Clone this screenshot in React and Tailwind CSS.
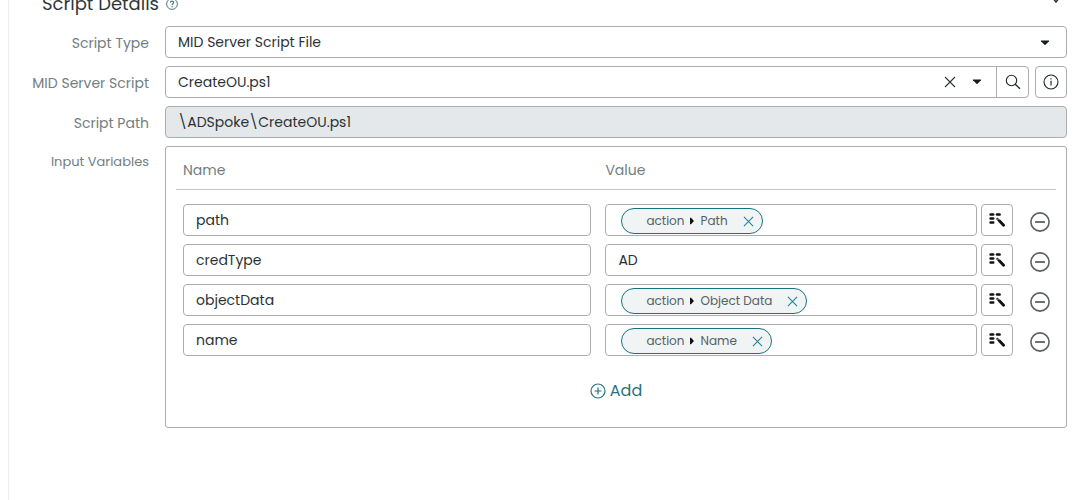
import { useState } from 'react'

const initialRows = [
  { id: 1, name: 'path', pill: 'Path' },
  { id: 2, name: 'credType', text: 'AD' },
  { id: 3, name: 'objectData', pill: 'Object Data' },
  { id: 4, name: 'name', pill: 'Name' },
]

const boxClass = 'h-8 rounded-[4px] border border-[#a9adae] bg-white'
const iconButton = `${boxClass} w-8 shrink-0 flex items-center justify-center`
const labelClass = 'w-[140px] shrink-0 pt-0.5 text-right text-[#727e80]'

function Caret({ className = '' }) {
  return (
    <svg viewBox="0 0 10 6" className={`w-[10px] h-[6px] ${className}`} fill="#161b1c" aria-hidden="true">
      <path d="M1.2.5h7.6q.7.2.2.8L5.5 4.8q-.5.5-1 0L1 1.3Q.5.7 1.2.5z" />
    </svg>
  )
}

function Cross({ size = 12 }) {
  return (
    <svg viewBox="0 0 12 12" width={size} height={size} fill="none" stroke="currentColor" strokeWidth="1.1" aria-hidden="true">
      <path d="M1 1l10 10M11 1L1 11" />
    </svg>
  )
}

function HelpIcon() {
  return (
    <svg viewBox="0 0 12 12" className="w-3 h-3" fill="none" stroke="#4c7884" aria-hidden="true">
      <circle cx="6" cy="6" r="5.4" />
      <path d="M4.4 4.8c0-2.1 3.3-2.1 3.3-.2 0 1.2-1.6 1.2-1.6 2.4M6.1 8v1.2" strokeWidth="1.2" />
    </svg>
  )
}

function SearchIcon() {
  return (
    <svg viewBox="0 0 16 16" className="w-4 h-4" fill="none" stroke="#202627" strokeWidth="1.1" aria-hidden="true">
      <circle cx="6.5" cy="6.5" r="5.2" />
      <path d="M10.2 10.2l4.8 4.6" strokeWidth="1.3" />
    </svg>
  )
}

function InfoIcon() {
  return (
    <svg viewBox="0 0 16 16" className="w-4 h-4" fill="none" stroke="#202627" strokeWidth="1.1" aria-hidden="true">
      <circle cx="8" cy="8" r="7" />
      <path d="M8 6.8v4.6M8 4.3v1.3" strokeWidth="1.2" />
    </svg>
  )
}

function PickerIcon() {
  return (
    <svg viewBox="0 0 16 14" className="w-4 h-[14px]" fill="none" stroke="#111" strokeLinecap="round" aria-hidden="true">
      <path d="M1.6 1.5h2.6M8 1.5h2.6M1.6 5.5h2.6M1.6 9.500h2.6" strokeWidth="2.6" />
      <path d="M10.6 8l4 4.2" strokeWidth="2.8" />
      <path d="M8.2 5.8l1.4 1.4" strokeWidth="2" />
      <path d="M8.3 5.9l.6.6" stroke="#fff" strokeWidth=".9" />
    </svg>
  )
}

function MinusIcon() {
  return (
    <svg viewBox="0 0 20 20" className="w-5 h-5" fill="none" stroke="#5d6163" strokeWidth="1.6" aria-hidden="true">
      <circle cx="10" cy="10" r="9.1" />
      <path d="M5 10h10" strokeWidth="1.8" />
    </svg>
  )
}

function PlusIcon() {
  return (
    <svg viewBox="0 0 16 16" className="w-4 h-4" fill="none" stroke="currentColor" strokeWidth="1.2" aria-hidden="true">
      <circle cx="8" cy="8" r="7" />
      <path d="M4.5 8h7M8 4.5v7" />
    </svg>
  )
}

function Pill({ label, onClear }) {
  return (
    <span className="h-[26px] flex items-center rounded-full border border-[#17727f] bg-[#f0f4f5] pl-6 pr-2 text-xs text-[#566163]">
      action
      <svg viewBox="0 0 4 8" className="w-1 h-2 mx-[6px]" fill="#111" aria-hidden="true">
        <path d="M0 .8l1 0 3 3.200-3 3.200H0z" />
      </svg>
      {label}
      <button type="button" aria-label={`Remove ${label}`} onClick={onClear} className="ml-[15px] text-[#1f7f92]">
        <Cross size={11} />
      </button>
    </span>
  )
}

export default function App() {
  const [type, setType] = useState('MID Server Script File')
  const [script, setScript] = useState('CreateOU.ps1')
  const [rows, setRows] = useState(initialRows)

  const update = (id, patch) => setRows(rs => rs.map(r => (r.id === id ? { ...r, ...patch } : r)))
  const remove = id => setRows(rs => rs.filter(r => r.id !== id))
  const add = () => setRows(rs => [...rs, { id: Date.now(), name: '', text: '' }])

  return (
    <div className="min-h-screen bg-white pl-2 font-['Poppins','Inter',sans-serif] text-sm text-[#2b3335]">
      <main className="min-h-screen overflow-hidden border-l border-[#ededed] pr-[17px]">
        <header className="-mt-2 h-6 flex items-center justify-between pl-[33px] pr-[6px]">
          <h2 className="flex items-center gap-[7px] text-lg text-[#2f383a]">
            Script Details
            <HelpIcon />
          </h2>
          <button type="button" aria-label="Collapse" className="h-4 self-start">
            <svg viewBox="0 0 10 6" className="w-[10px] h-[6px]" fill="none" stroke="#333" strokeWidth="1.5" aria-hidden="true">
              <path d="M1 0l4 5 4-5" />
            </svg>
          </button>
        </header>

        <form className="mt-[10px] flex flex-col gap-2" onSubmit={e => e.preventDefault()}>
          <div className="flex items-center gap-4">
            <label htmlFor="type" className={labelClass}>Script Type</label>
            <div className="relative flex-1">
              <select
                id="type"
                value={type}
                onChange={e => setType(e.target.value)}
                className={`${boxClass} block w-full appearance-none px-3`}
              >
                <option>MID Server Script File</option>
              </select>
              <Caret className="absolute right-[17px] top-[14px] pointer-events-none" />
            </div>
          </div>

          <div className="flex items-center gap-4">
            <label htmlFor="script" className={labelClass}>MID Server Script</label>
            <div className="flex flex-1 gap-[6px]">
              <div className={`${boxClass} flex flex-1 items-center`}>
                <input
                  id="script"
                  value={script}
                  onChange={e => setScript(e.target.value)}
                  className="min-w-0 flex-1 px-3 outline-none"
                />
                <button type="button" aria-label="Clear" onClick={() => setScript('')}>
                  <Cross />
                </button>
                <button type="button" aria-label="Show options" className="ml-4 mr-[14px]">
                  <Caret />
                </button>
                <button type="button" aria-label="Search" className="h-full w-8 flex items-center justify-center border-l border-[#a9adae]">
                  <SearchIcon />
                </button>
              </div>
              <button type="button" aria-label="Information" className={iconButton}>
                <InfoIcon />
              </button>
            </div>
          </div>

          <div className="flex items-center gap-4">
            <label htmlFor="script-path" className={labelClass}>Script Path</label>
            <input
              id="script-path"
              readOnly
              value={'\\ADSpoke\\CreateOU.ps1'}
              className="h-8 min-w-0 flex-1 rounded-[4px] border border-[#a9adae] bg-[#e4e8eb] px-3"
            />
          </div>

          <div className="flex items-start gap-4">
            <span id="variables" className={`${labelClass} mt-[5px] text-[13px]`}>Input Variables</span>
            <div className="min-w-0 flex-1 rounded-[3px] border border-[#a9adae] px-[10px]">
              <table aria-labelledby="variables" className="w-full table-fixed border-separate border-spacing-0">
                <thead>
                  <tr className="text-left leading-[22px] text-[#727e80]">
                    <th className="w-[48%] border-b border-[#c4c8c9] pt-3 pb-2 pl-[7px] font-normal">Name</th>
                    <th className="border-b border-[#c4c8c9] pt-3 pb-2 pl-[7px] font-normal">Value</th>
                    <td className="w-[43px] border-b border-[#c4c8c9]" />
                  </tr>
                </thead>
                <tbody className="[&>tr:first-child>td]:pt-[14px]">
                  {rows.map(row => (
                    <tr key={row.id}>
                      <td className="px-[7px] pt-2">
                        <input
                          aria-label="Name"
                          value={row.name}
                          onChange={e => update(row.id, { name: e.target.value })}
                          className={`${boxClass} block w-full px-3`}
                        />
                      </td>
                      <td className="pl-[7px] pt-2">
                        <div className="flex gap-1">
                          {row.pill ? (
                            <div className={`${boxClass} flex min-w-0 flex-1 items-center pt-0.5 pl-[15px]`}>
                              <Pill label={row.pill} onClear={() => update(row.id, { pill: null, text: '' })} />
                            </div>
                          ) : (
                            <input
                              aria-label="Value"
                              value={row.text}
                              onChange={e => update(row.id, { text: e.target.value })}
                              className={`${boxClass} min-w-0 flex-1 px-3`}
                            />
                          )}
                          <button type="button" aria-label="Pick data" className={iconButton}>
                            <PickerIcon />
                          </button>
                        </div>
                      </td>
                      <td className="pt-2 pr-[6px]">
                        <button type="button" aria-label="Remove variable" onClick={() => remove(row.id)} className="ml-auto block pt-1">
                          <MinusIcon />
                        </button>
                      </td>
                    </tr>
                  ))}
                </tbody>
              </table>
              <button
                type="button"
                onClick={add}
                className="mx-auto mt-6 mb-[25px] flex items-center gap-1 text-base leading-[22px] text-[#2a7080]"
              >
                <PlusIcon />
                Add
              </button>
            </div>
          </div>
        </form>
      </main>
    </div>
  )
}
